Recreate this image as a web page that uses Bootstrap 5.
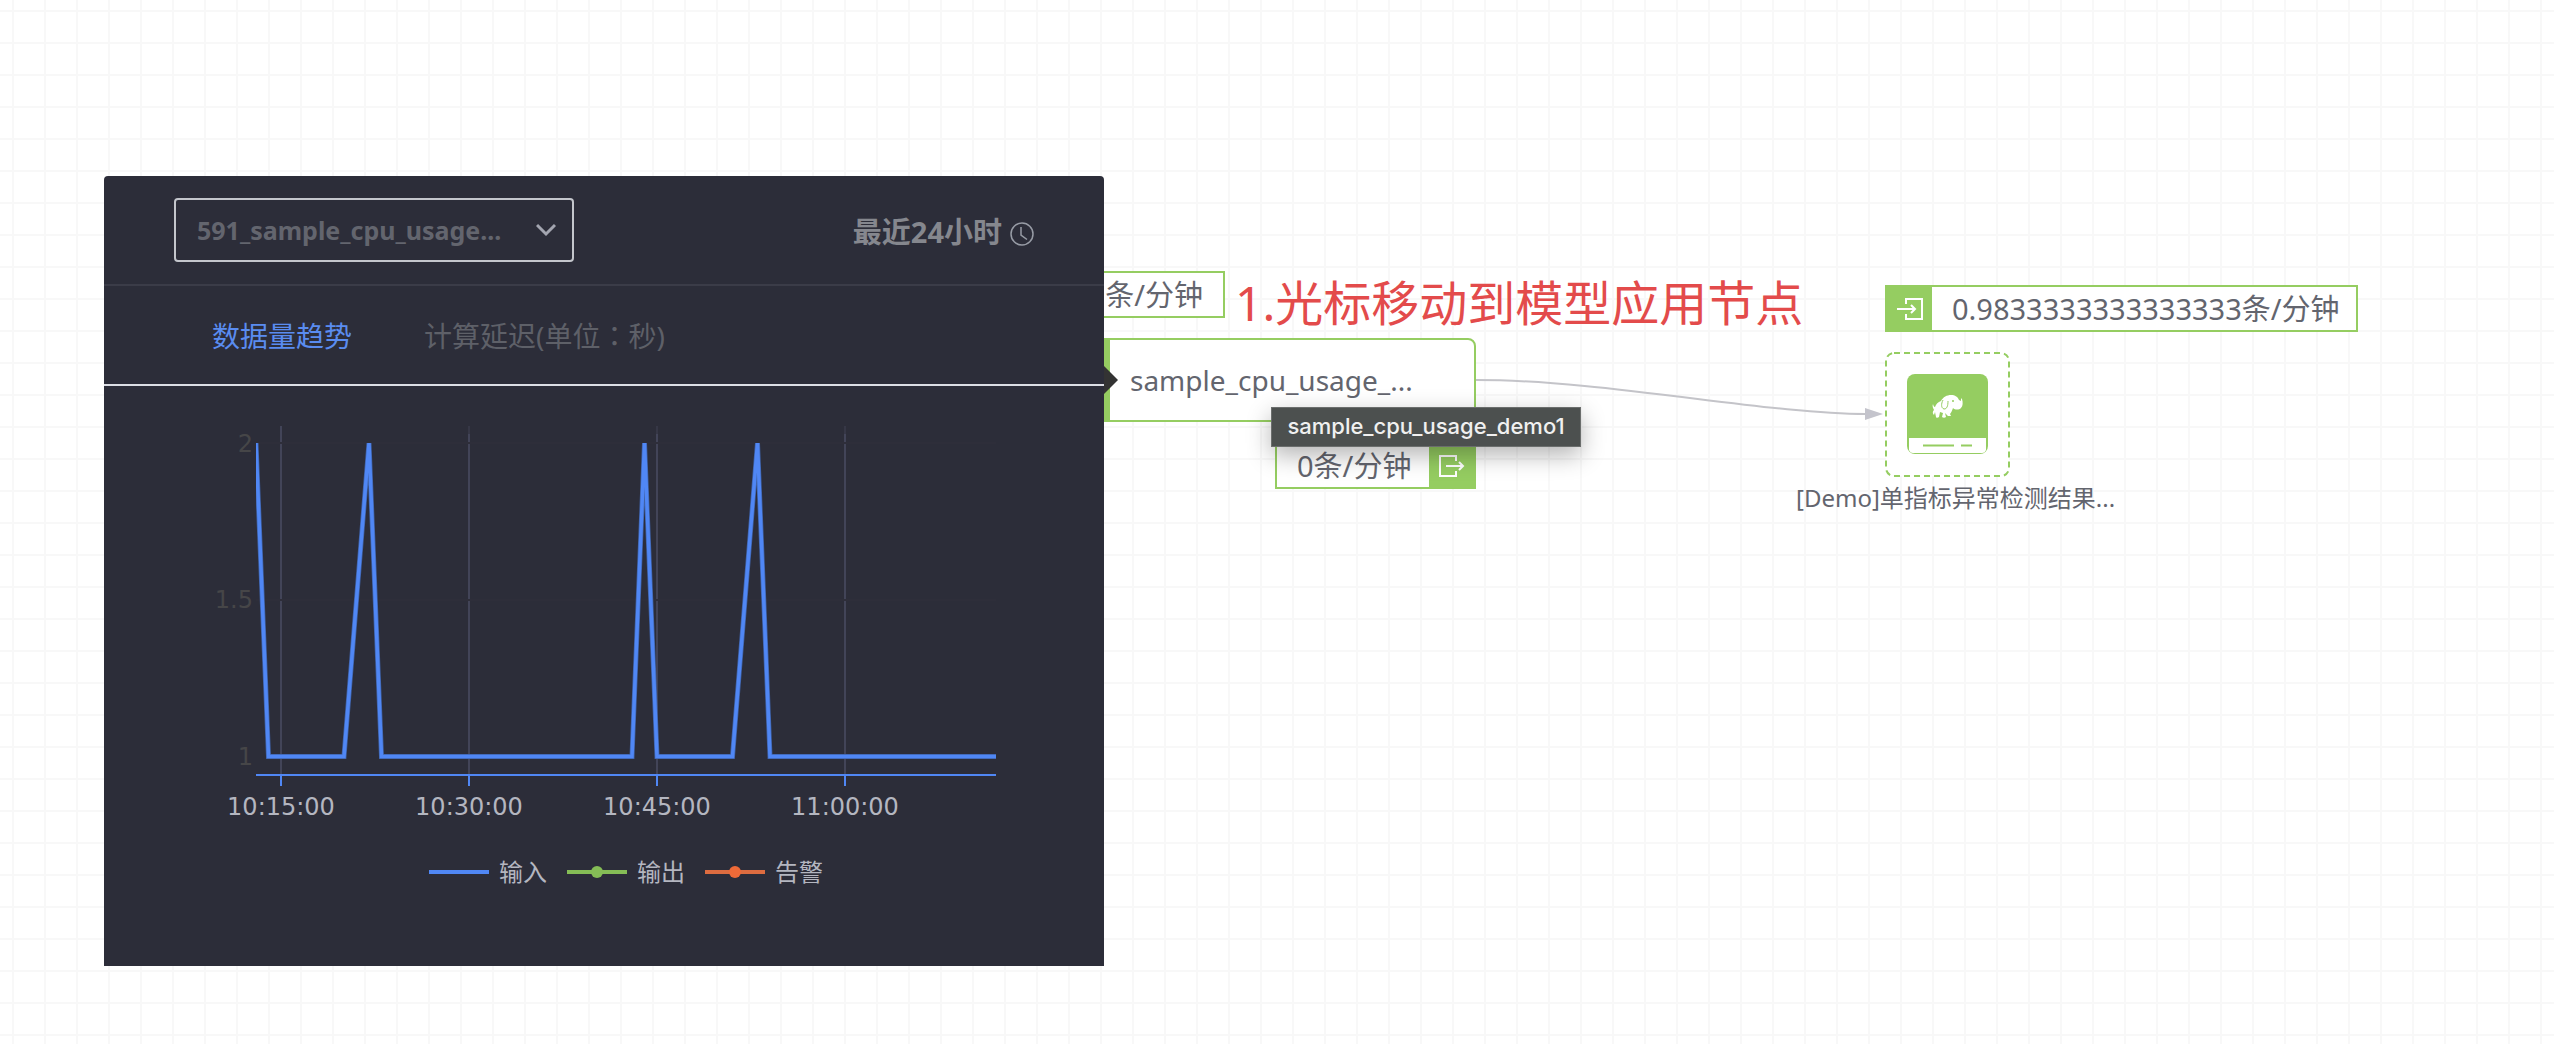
<!DOCTYPE html>
<html lang="zh-CN">
<head>
<meta charset="utf-8">
<meta name="viewport" content="width=device-width, initial-scale=1">
<title>数据流画布</title>
<link href="https://cdn.jsdelivr.net/npm/bootstrap@5.3.0/dist/css/bootstrap.min.css" rel="stylesheet">
<style>
:root{--green:#95cd61;--ink:#63656e;--panel:#2c2d39}
body{font-family:"Noto Sans","Noto Sans CJK SC",sans-serif;color:var(--ink);font-size:28px;line-height:40px}
.flow-canvas{min-height:100vh;background-color:#fff;
  background-image:linear-gradient(#f8f8f8 2px,transparent 2px),linear-gradient(90deg,#f8f8f8 2px,transparent 2px);
  background-size:32px 32px;background-position:12px 10px}
.spot{position:absolute;white-space:nowrap}

/* monitor popover */
.monitor{left:104px;top:176px;width:1000px;background:var(--panel);border-radius:4px 4px 0 0;z-index:3}
.monitor::after{content:"";position:absolute;left:100%;top:190px;border:14px solid transparent;border-left-color:#333;border-right:0}
.monitor-head{padding:22px 70px;border-bottom:2px solid #3b3c48}
.pick{position:relative;width:400px}
.pick select{display:block;appearance:none;width:100%;height:64px;padding:0 60px 0 21px;background:transparent;border:2px solid #c4c6cc;border-radius:4px;color:#63656e;font-weight:700;font-size:25px}
.pick svg{position:absolute;right:18px;top:25px;pointer-events:none}
.range-btn{color:#85878e;font-weight:700;font-size:29px;background:none;border:0;padding:4px 0 0;gap:8px}
.range-btn svg{margin-top:4px}
.tabs-line{padding:30px 108px 28px;gap:72px;border-bottom:2px solid #dcdee5}
.tabs-line a{color:#5e6068;text-decoration:none}
.tabs-line a.active{color:#5a8cf0}
.mid-colon{font-family:"Noto Sans CJK TC",sans-serif;line-height:1}
.chart text{font-family:"DejaVu Sans",sans-serif;font-size:24px}
.legend-row{gap:20px;padding:26px 0 74px 44px;font-size:24px;line-height:40px;color:#b4b6c0}

/* nodes */
.rate{height:47px;border:2px solid var(--green);background:#fff;color:var(--ink);font-size:29px;line-height:44px}
.rate-icon{width:45px;background:var(--green)}
.rate-text{padding:0 20px}
.rate-a{left:980px;top:271px;width:245px}
.rate-b{left:1275px;top:442px;width:201px}
.rate-c{left:1885px;top:285px;width:473px}
.model{left:1020px;top:338px;width:456px;height:84px;background:#fff;border:2px solid var(--green);border-left-width:90px;border-radius:8px;padding:0 20px}
.hint{left:1235px;top:268px;font-size:48px;line-height:70px;color:#e34b4b}
.tip{left:1271px;top:407px;width:310px;height:40px;background:#4c504f;border:1px solid #6b6e6d;color:#f0f0f0;font:500 22px/36px Inter,sans-serif;box-shadow:0 8px 24px rgba(0,0,0,.3);z-index:2}
.store{left:1885px;top:352px;width:125px}
.store-label{left:1796px;top:480px;font-size:24px;line-height:36px}
.edge{left:1476px;top:370px}
</style>
<script src="https://cdn.jsdelivr.net/npm/bootstrap@5.3.0/dist/js/bootstrap.bundle.min.js"></script>
</head>
<body>
<main class="flow-canvas position-relative overflow-hidden">

  <section class="monitor spot">
    <header class="monitor-head d-flex justify-content-between align-items-center">
      <div class="pick">
        <select aria-label="数据源"><option>591_sample_cpu_usage...</option></select>
        <svg width="20" height="14" viewBox="0 0 20 14" fill="none" stroke="#a3a5b0" stroke-width="3"><path d="M1 2l9 9 9-9"/></svg>
      </div>
      <button type="button" class="range-btn d-flex align-items-center">最近24小时
        <svg width="24" height="24" viewBox="0 0 24 24" fill="none" stroke="#979ba5" stroke-width="1.5"><circle cx="12" cy="12" r="11"/><path d="M11 5v8l6 4.500"/></svg>
      </button>
    </header>
    <nav class="tabs-line d-flex">
      <a href="#" class="active">数据量趋势</a>
      <a href="#">计算延迟(单位<span class="mid-colon" lang="zh-TW">：</span>秒)</a>
    </nav>
    <svg class="chart d-block w-100" viewBox="0 0 1000 440">
      <defs><clipPath id="plot"><rect x="152" y="57" width="740" height="340"/></clipPath></defs>
      <g stroke="#424458" stroke-width="2"><path d="M177 40V388M365 48V388M553 48V388M741 48V388"/><path d="M365 40v8M553 40v8M741 40v8" stroke="#363746"/></g>
      <path d="M152 57H892M152 214H892" stroke="#2e2e3a" stroke-width="2"/>
      <g fill="#464648" text-anchor="end"><text x="149" y="66">2</text><text x="149" y="222">1.5</text><text x="149" y="379">1</text></g>
      <g clip-path="url(#plot)" fill="none" stroke-linejoin="miter">
        <path d="M152 57L164.500 370.500H240L265 57L277.500 370.500H528L540.500 57L553 370.500H628.500L653.500 57L666 370.500H892" stroke="#3f62a8" stroke-width="5" stroke-miterlimit="2"/>
        <path d="M152 57L164.500 370.500H240L265 57L277.500 370.500H528L540.500 57L553 370.500H628.500L653.500 57L666 370.500H892" stroke="#5087f5" stroke-width="3.500" stroke-miterlimit="2"/>
      </g>
      <path d="M152 389H892M177 389v11M365 389v11M553 389v11M741 389v11" stroke="#5087f5" stroke-width="2"/>
      <g fill="#b4b6c0" text-anchor="middle"><text x="177" y="429">10:15:00</text><text x="365" y="429">10:30:00</text><text x="553" y="429">10:45:00</text><text x="741" y="429">11:00:00</text></g>
    </svg>
    <div class="legend-row d-flex justify-content-center">
      <div class="d-flex align-items-center"><svg class="me-2" width="62" height="14" viewBox="0 0 62 14"><path d="M0 7h60" stroke="#5087f5" stroke-width="4"/></svg>输入</div>
      <div class="d-flex align-items-center"><svg class="me-2" width="62" height="14" viewBox="0 0 62 14"><path d="M0 7h60" stroke="#85bd56" stroke-width="4"/><circle cx="30" cy="7" r="6" fill="#85bd56"/></svg>输出</div>
      <div class="d-flex align-items-center"><svg class="me-2" width="62" height="14" viewBox="0 0 62 14"><path d="M0 7h60" stroke="#dd6c40" stroke-width="4"/><circle cx="30" cy="7" r="6" fill="#ee6a38"/></svg>告警</div>
    </div>
  </section>

  <div class="spot rate rate-a d-flex align-items-center justify-content-end"><span class="rate-text">条/分钟</span></div>
  <div class="spot hint">1.光标移动到模型应用节点</div>

  <div class="spot model d-flex align-items-center">sample_cpu_usage_...</div>
  <div class="spot rate rate-b d-flex justify-content-between">
    <span class="rate-text pe-0">0条/分钟</span>
    <span class="rate-icon flex-shrink-0 d-flex align-items-center justify-content-center">
      <svg width="26" height="24" viewBox="0 0 26 24" fill="none" stroke="#fff" stroke-width="2"><path d="M17 7V2H1v20h16v-5M7 12h17M20 8l4 4-4 4"/></svg>
    </span>
  </div>
  <div class="spot tip text-center" role="tooltip">sample_cpu_usage_demo1</div>

  <svg class="spot edge" width="408" height="60" viewBox="0 0 408 60"><path d="M0 10C130 10 290 44 390 44" fill="none" stroke="#c4c4c9" stroke-width="2"/><path d="M389 38l18 6-18 6z" fill="#c4c4cc"/></svg>

  <div class="spot rate rate-c d-flex">
    <span class="rate-icon flex-shrink-0 d-flex align-items-center justify-content-center">
      <svg width="26" height="24" viewBox="0 0 26 24" fill="none" stroke="#fff" stroke-width="2"><path d="M9 7V2h16v20H9v-5M0 12h18M14 8l4 4-4 4"/></svg>
    </span>
    <span class="rate-text pe-0">0.9833333333333333条/分钟</span>
  </div>
  <svg class="spot store" viewBox="0 0 125 125">
    <rect x="1" y="1" width="123" height="123" rx="8" fill="#fff" stroke="#95cd61" stroke-width="2" stroke-dasharray="6 4"/>
    <rect x="22" y="22" width="81" height="80" rx="8" fill="#95cd61"/>
    <path d="M24 86h77v12q-1 3-4 3H28q-3 0-4-3z" fill="#fff"/>
    <path d="M38 93.500h31M76 93.500h11" stroke="#95cd61" stroke-width="2"/>
    <path d="M49 58c-1-2-2-4-1-6 .5 2 1 3 2 3 1-3 3-5 6-6 2-4 6-6 10-6 4 0 7 2 8 5l2 1c0-2 0-4 1-2 1 3 1 7-1 9-2 2-6 2-8 0-1 3-2 5-3 6l1 2h-3l-3-3 1 4c-1 1-3 1-4 0l1-4-3-1-1 5c-1 1-3 1-3 0l-1-5-1 3c-1-1-2-3 0-5z" fill="#fff"/>
    <path d="M58 48c-2 4-2 8 1 9 3 0 4-3 4-8" fill="none" stroke="#95cd61" stroke-width="1"/><circle cx="68" cy="49" r="1" fill="#95cd61"/>
  </svg>
  <div class="spot store-label">[Demo]单指标异常检测结果...</div>
</main>
</body>
</html>
